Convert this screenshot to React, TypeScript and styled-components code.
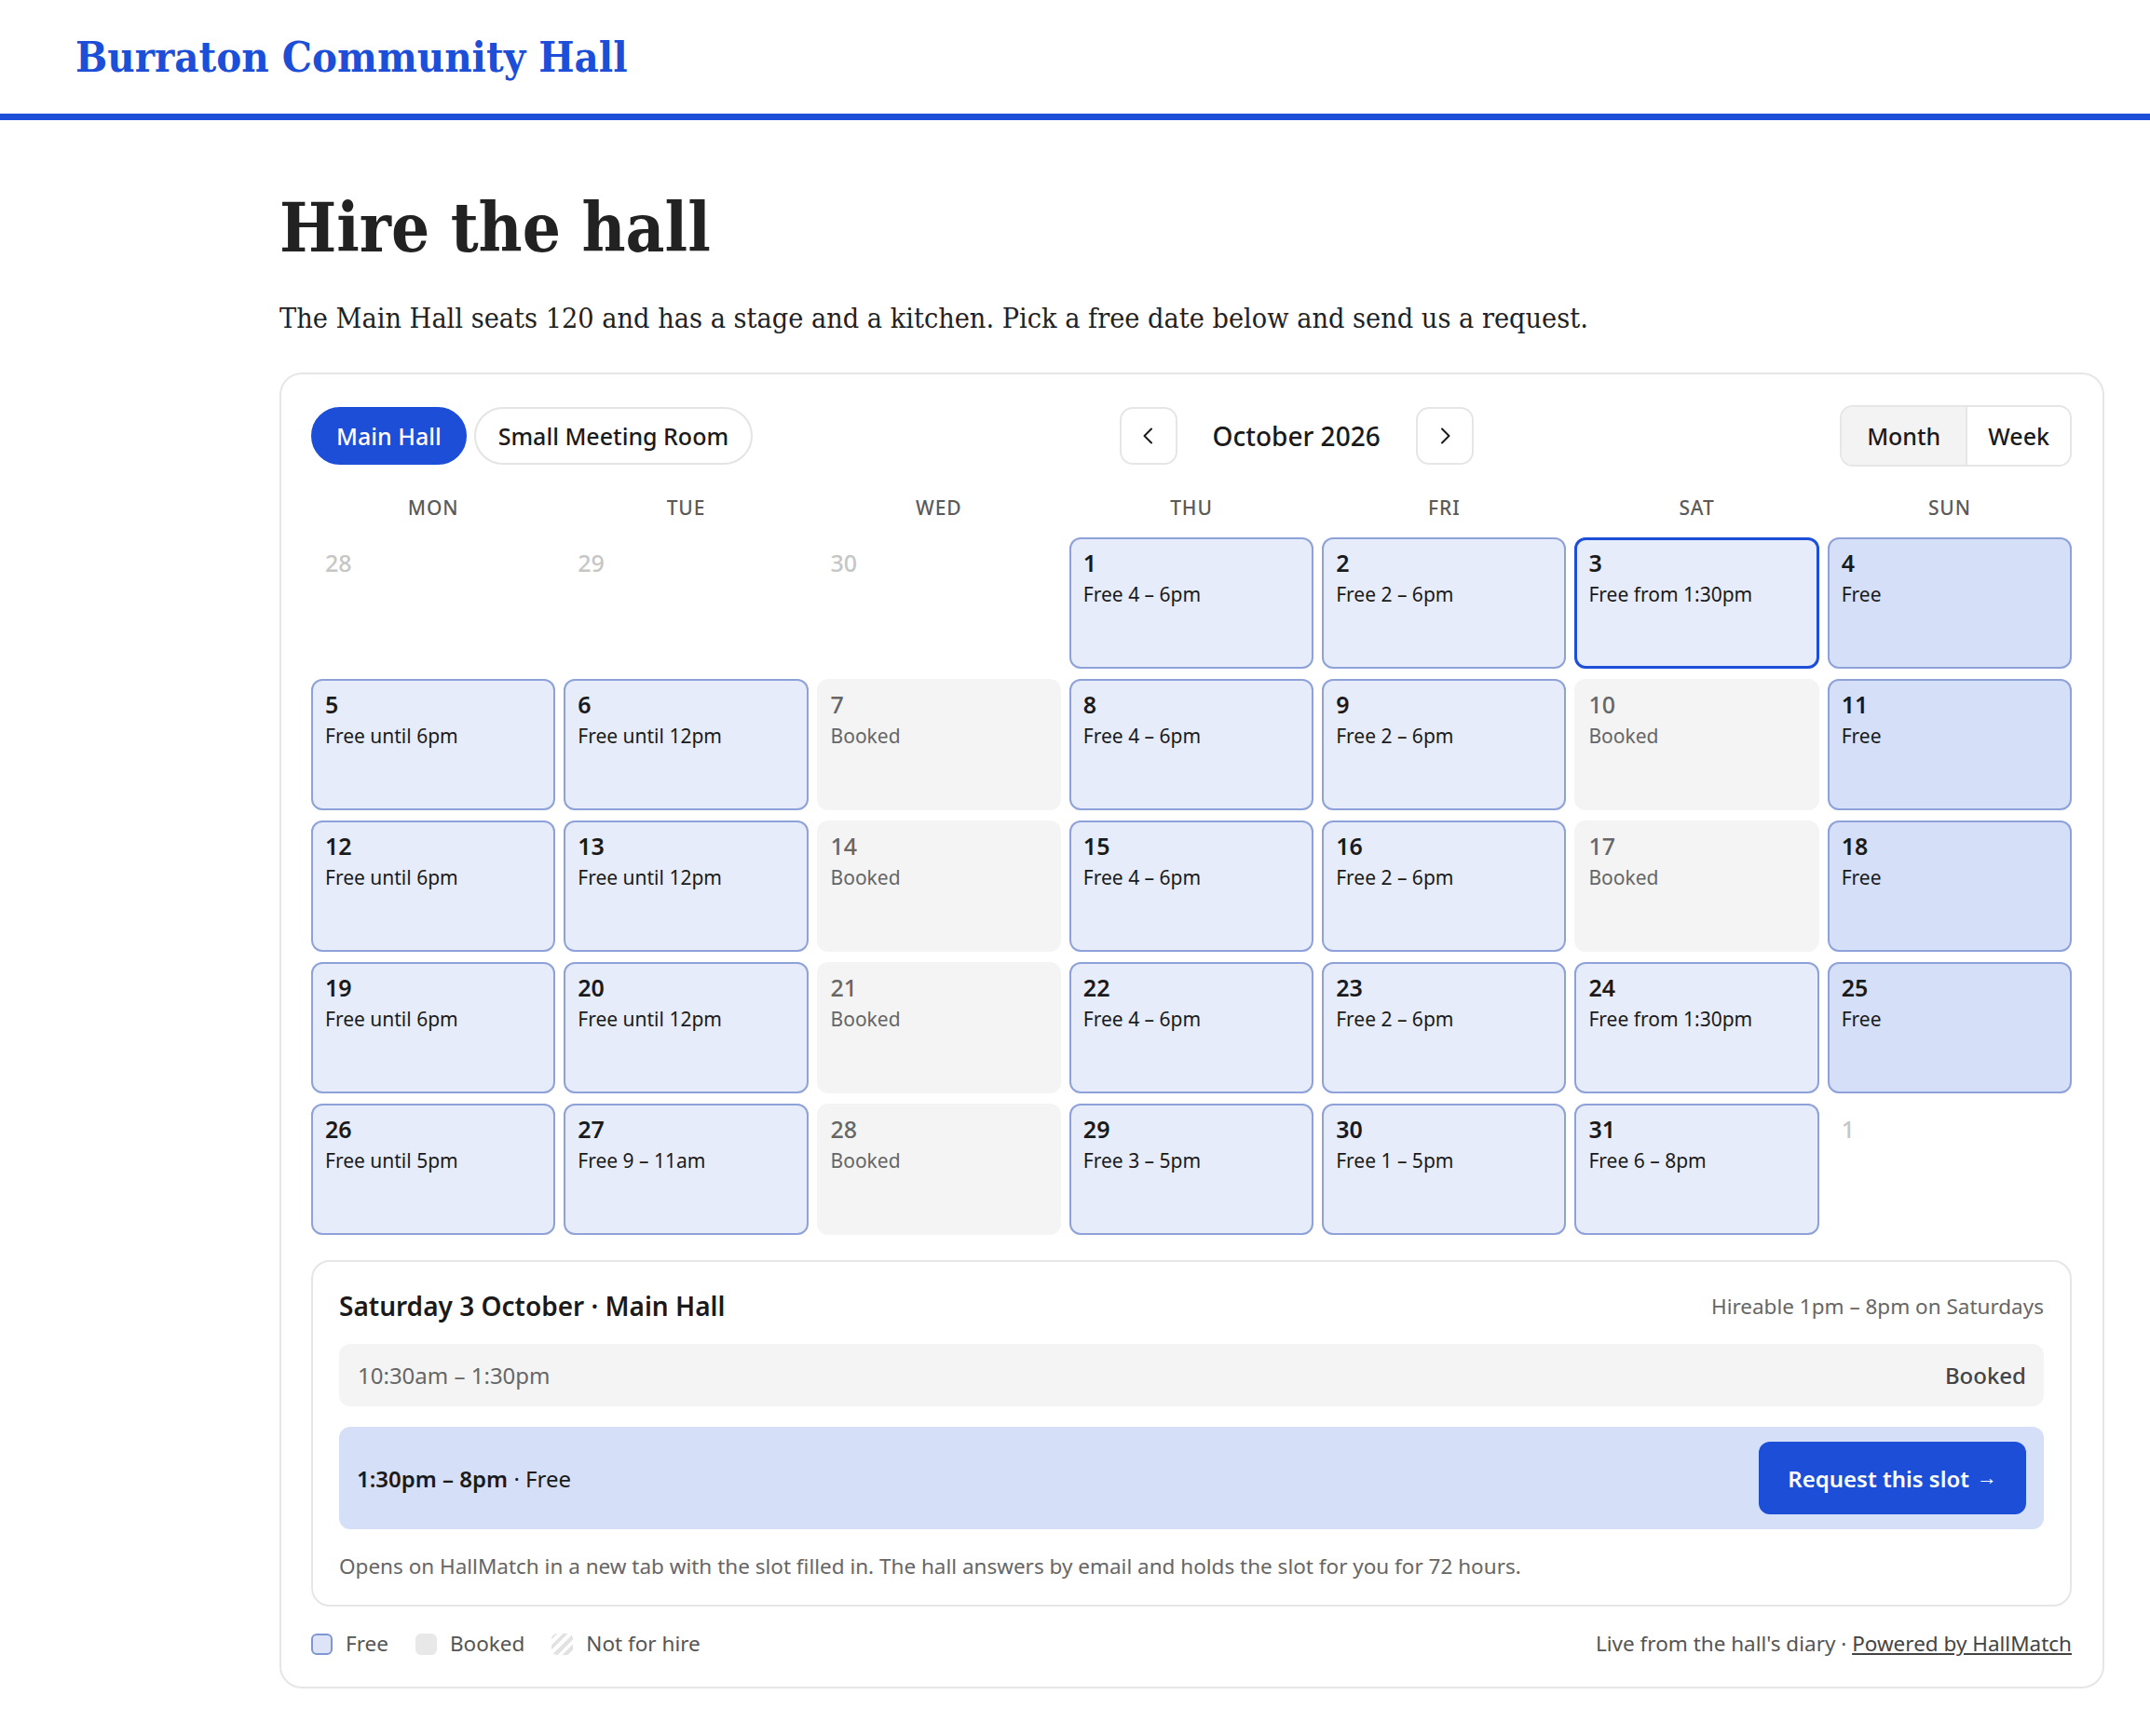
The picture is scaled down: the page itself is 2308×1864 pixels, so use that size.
import React from "react";
import styled, { createGlobalStyle, css } from "styled-components";

const blue = "#1d4ed8";
const serif = `"DejaVu Serif Condensed", "DejaVu Serif", Georgia, serif`;
const sans = `"Noto Sans", "Open Sans", sans-serif`;

const GlobalStyle = createGlobalStyle`
  * { box-sizing: border-box; }
  body {
    margin: 0;
    background: #fff;
    color: #1a1a1a;
    font-family: ${sans};
  }
`;

const Header = styled.header`
  height: 129px;
  display: flex;
  align-items: center;
  padding: 0 81px;
  border-bottom: 7px solid ${blue};
`;

const SiteTitle = styled.div`
  font-family: ${serif};
  font-weight: 700;
  font-size: 45px;
  color: ${blue};
`;

const Main = styled.main`
  padding: 0 49px 40px 300px;
`;

const Title = styled.h1`
  margin: 76px 0 0;
  font-family: ${serif};
  font-size: 72px;
  line-height: 1.1;
  font-weight: 700;
  color: #222;
`;

const Lead = styled.p`
  margin: 37px 0 0;
  font-family: ${serif};
  font-size: 30.3px;
  line-height: 42px;
  color: #222;
`;

const Card = styled.section`
  margin-top: 37px;
  border: 2px solid #e6e6e6;
  border-radius: 24px;
  padding: 35px 33px 31px 32px;
`;

const Toolbar = styled.div`
  display: flex;
  justify-content: space-between;
  align-items: center;
  height: 62px;
`;

const Tabs = styled.div`
  display: flex;
  gap: 8px;
`;

const Tab = styled.button<{ $active?: boolean }>`
  height: 62px;
  padding: 0 ${({ $active }) => ($active ? "25px" : "24px")};
  border-radius: 999px;
  font-family: ${sans};
  font-size: 25px;
  font-weight: 500;
  cursor: pointer;
  ${({ $active }) =>
    $active
      ? css`
          background: ${blue};
          color: #fff;
          border: 2px solid ${blue};
        `
      : css`
          background: #fff;
          color: #1a1a1a;
          border: 2px solid #e4e4e4;
        `}
`;

const MonthNav = styled.div`
  display: flex;
  align-items: center;
  gap: 38px;
`;

const NavButton = styled.button`
  width: 62px;
  height: 62px;
  display: flex;
  align-items: center;
  justify-content: center;
  border: 2px solid #e6e6e6;
  border-radius: 14px;
  background: #fff;
  color: #1a1a1a;
  padding: 0;
`;

const MonthLabel = styled.div`
  font-size: 28px;
  font-weight: 500;
  color: #1a1a1a;
`;

const Segmented = styled.div`
  display: flex;
  height: 66px;
  border: 2px solid #e6e6e6;
  border-radius: 14px;
  overflow: hidden;
`;

const Segment = styled.button<{ $active?: boolean }>`
  border: none;
  padding: 0 ${({ $active }) => ($active ? "27px" : "22px")};
  font-family: ${sans};
  font-size: 25px;
  font-weight: 500;
  color: #1a1a1a;
  background: ${({ $active }) => ($active ? "#f3f3f3" : "#fff")};
  & + & {
    border-left: 2px solid #e6e6e6;
  }
`;

const Grid = styled.div`
  display: grid;
  grid-template-columns: repeat(7, 1fr);
  column-gap: 9px;
  row-gap: 11px;
`;

const WeekHead = styled(Grid)`
  margin: 32px 0 18px;
`;

const WeekDay = styled.div`
  text-align: center;
  font-size: 21px;
  line-height: 28px;
  font-weight: 500;
  letter-spacing: 0.04em;
  color: #5a5a5a;
`;

type Kind = "free" | "full" | "booked" | "outside";

const kindStyles: Record<Kind, ReturnType<typeof css>> = {
  free: css`
    background: #e7ecfb;
    border: 2px solid #8ea2d9;
    color: #1a1a1a;
  `,
  full: css`
    background: #d5dff7;
    border: 2px solid #8ea2d9;
    color: #1a1a1a;
  `,
  booked: css`
    background: #f4f4f4;
    border: 2px solid #f4f4f4;
    color: #666;
  `,
  outside: css`
    background: transparent;
    border: 2px solid transparent;
    color: #c6c6c6;
  `,
};

const Cell = styled.div<{ $kind: Kind; $selected?: boolean }>`
  height: 141px;
  border-radius: 12px;
  padding: 9px 13px;
  ${({ $kind }) => kindStyles[$kind]}
  ${({ $selected }) =>
    $selected &&
    css`
      border: 3px solid ${blue};
      padding: 8px 12px;
    `}
`;

const DayNum = styled.div<{ $muted?: boolean }>`
  font-size: 25px;
  line-height: 32px;
  font-weight: ${({ $muted }) => ($muted ? 500 : 600)};
`;

const DayNote = styled.div`
  margin-top: 3px;
  font-size: 21px;
  line-height: 30px;
`;

const Detail = styled.div`
  margin-top: 27px;
  border: 2px solid #e6e6e6;
  border-radius: 20px;
  padding: 28px 28px 26px;
`;

const DetailHead = styled.div`
  display: flex;
  justify-content: space-between;
  align-items: center;
  height: 38px;
  margin-bottom: 22px;
`;

const DetailTitle = styled.div`
  font-size: 28px;
  font-weight: 600;
  color: #1a1a1a;
`;

const Muted = styled.div`
  font-size: 22.5px;
  color: #666;
`;

const Slot = styled.div<{ $free?: boolean }>`
  display: flex;
  justify-content: space-between;
  align-items: center;
  border-radius: 12px;
  font-size: 24px;
  ${({ $free }) =>
    $free
      ? css`
          height: 110px;
          margin-top: 22px;
          padding: 0 19px 0 19px;
          background: #d5dff7;
          color: #1a1a1a;
        `
      : css`
          height: 67px;
          padding: 0 19px 0 20px;
          background: #f4f4f4;
          color: #666;
        `}
`;

const SlotTime = styled.span`
  font-weight: 600;
`;

const SlotState = styled.span`
  font-weight: 500;
  color: #444;
`;

const RequestButton = styled.button`
  display: flex;
  align-items: center;
  gap: 8px;
  height: 78px;
  padding: 0 31px;
  border: none;
  border-radius: 12px;
  background: ${blue};
  color: #fff;
  font-family: ${sans};
  font-size: 24px;
  font-weight: 600;
`;

const Arrow = styled.span`
  font-family: "Liberation Sans", "DejaVu Sans", sans-serif;
  font-size: 22px;
  font-weight: 700;
`;

const Note = styled.p`
  margin: 25px 0 0;
  font-size: 22.5px;
  line-height: 30px;
  color: #666;
`;

const Legend = styled.div`
  display: flex;
  justify-content: space-between;
  align-items: center;
  margin-top: 25px;
  font-size: 22.5px;
  line-height: 30px;
  color: #555;
`;

const Keys = styled.div`
  display: flex;
  align-items: center;
  gap: 29px;
`;

const Key = styled.span`
  display: flex;
  align-items: center;
  gap: 14px;
`;

const Swatch = styled.span<{ $kind: "free" | "booked" | "closed" }>`
  width: 23px;
  height: 23px;
  border-radius: 6px;
  ${({ $kind }) =>
    $kind === "free"
      ? css`
          background: #dde4f8;
          border: 2px solid #7f96d6;
        `
      : $kind === "booked"
        ? css`
            background: #e8e8e8;
          `
        : css`
            background: repeating-linear-gradient(
              -45deg,
              #fff 0 4px,
              #e2e2e2 4px 8px
            );
          `}
`;

const Link = styled.a`
  color: #444;
  text-decoration: underline;
`;

const Chevron = ({ dir }: { dir: "left" | "right" }) => (
  <svg width="24" height="24" viewBox="0 0 24 24" fill="none">
    <path
      d={dir === "left" ? "M15 4.5 L7.5 12 L15 19.5" : "M9 4.5 L16.5 12 L9 19.5"}
      stroke="currentColor"
      strokeWidth="2"
      strokeLinecap="round"
      strokeLinejoin="round"
    />
  </svg>
);

type Day = { n: number; kind: Kind; note?: string; selected?: boolean };

const out = (n: number): Day => ({ n, kind: "outside" });
const free = (n: number, note: string): Day => ({ n, kind: "free", note });
const full = (n: number): Day => ({ n, kind: "full", note: "Free" });
const booked = (n: number): Day => ({ n, kind: "booked", note: "Booked" });

const days: Day[] = [
  out(28), out(29), out(30),
  free(1, "Free 4 – 6pm"), free(2, "Free 2 – 6pm"),
  { n: 3, kind: "free", note: "Free from 1:30pm", selected: true }, full(4),
  free(5, "Free until 6pm"), free(6, "Free until 12pm"), booked(7),
  free(8, "Free 4 – 6pm"), free(9, "Free 2 – 6pm"), booked(10), full(11),
  free(12, "Free until 6pm"), free(13, "Free until 12pm"), booked(14),
  free(15, "Free 4 – 6pm"), free(16, "Free 2 – 6pm"), booked(17), full(18),
  free(19, "Free until 6pm"), free(20, "Free until 12pm"), booked(21),
  free(22, "Free 4 – 6pm"), free(23, "Free 2 – 6pm"), free(24, "Free from 1:30pm"), full(25),
  free(26, "Free until 5pm"), free(27, "Free 9 – 11am"), booked(28),
  free(29, "Free 3 – 5pm"), free(30, "Free 1 – 5pm"), free(31, "Free 6 – 8pm"), out(1),
];

const weekdays = ["Mon", "Tue", "Wed", "Thu", "Fri", "Sat", "Sun"];

export default function App() {
  return (
    <>
      <GlobalStyle />
      <Header>
        <SiteTitle>Burraton Community Hall</SiteTitle>
      </Header>
      <Main>
        <Title>Hire the hall</Title>
        <Lead>
          The Main Hall seats 120 and has a stage and a kitchen. Pick a free date below and send us a
          request.
        </Lead>
        <Card>
          <Toolbar>
            <Tabs>
              <Tab $active>Main Hall</Tab>
              <Tab>Small Meeting Room</Tab>
            </Tabs>
            <MonthNav>
              <NavButton aria-label="Previous month">
                <Chevron dir="left" />
              </NavButton>
              <MonthLabel>October 2026</MonthLabel>
              <NavButton aria-label="Next month">
                <Chevron dir="right" />
              </NavButton>
            </MonthNav>
            <Segmented>
              <Segment $active>Month</Segment>
              <Segment>Week</Segment>
            </Segmented>
          </Toolbar>

          <WeekHead>
            {weekdays.map((d) => (
              <WeekDay key={d}>{d.toUpperCase()}</WeekDay>
            ))}
          </WeekHead>

          <Grid>
            {days.map((d, i) => (
              <Cell key={i} $kind={d.kind} $selected={d.selected}>
                <DayNum $muted={d.kind === "booked" || d.kind === "outside"}>{d.n}</DayNum>
                {d.note && <DayNote>{d.note}</DayNote>}
              </Cell>
            ))}
          </Grid>

          <Detail>
            <DetailHead>
              <DetailTitle>Saturday 3 October · Main Hall</DetailTitle>
              <Muted>Hireable 1pm – 8pm on Saturdays</Muted>
            </DetailHead>
            <Slot>
              <span>10:30am – 1:30pm</span>
              <SlotState>Booked</SlotState>
            </Slot>
            <Slot $free>
              <span>
                <SlotTime>1:30pm – 8pm</SlotTime> · Free
              </span>
              <RequestButton>
                Request this slot <Arrow>→</Arrow>
              </RequestButton>
            </Slot>
            <Note>
              Opens on HallMatch in a new tab with the slot filled in. The hall answers by email and
              holds the slot for you for 72 hours.
            </Note>
          </Detail>

          <Legend>
            <Keys>
              <Key>
                <Swatch $kind="free" />
                Free
              </Key>
              <Key>
                <Swatch $kind="booked" />
                Booked
              </Key>
              <Key>
                <Swatch $kind="closed" />
                Not for hire
              </Key>
            </Keys>
            <span>
              Live from the hall's diary · <Link href="#">Powered by HallMatch</Link>
            </span>
          </Legend>
        </Card>
      </Main>
    </>
  );
}
